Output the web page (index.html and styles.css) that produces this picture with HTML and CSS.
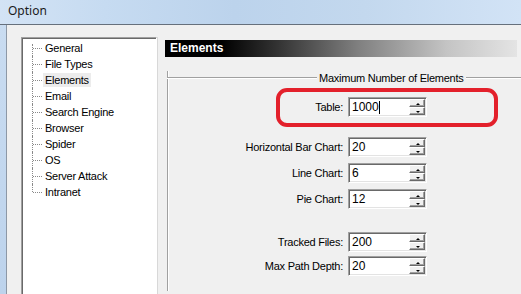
FILE: index.html
```html
<!DOCTYPE html>
<html>
<head>
<meta charset="utf-8">
<title>Option</title>
<link rel="stylesheet" href="styles.css">
</head>
<body>
<div class="titlebar"><span class="title">Option</span></div>
<div class="main">
  <div class="frame"></div>
  <div class="content">
    <div class="tree">
      <ul class="tree-list">
        <li><span class="item">General</span></li>
        <li><span class="item">File Types</span></li>
        <li><span class="item selected">Elements</span></li>
        <li><span class="item">Email</span></li>
        <li><span class="item">Search Engine</span></li>
        <li><span class="item">Browser</span></li>
        <li><span class="item">Spider</span></li>
        <li><span class="item">OS</span></li>
        <li><span class="item">Server Attack</span></li>
        <li class="last"><span class="item">Intranet</span></li>
      </ul>
    </div>
    <div class="panel">
      <div class="header">Elements</div>
      <div class="group">
        <div class="legend"><span class="line left"></span><span class="legend-text">Maximum Number of Elements</span><span class="line right"></span></div>
        <div class="rows first">
          <label class="lbl">Table:</label>
          <div class="spin"><span class="val">1000<span class="caret"></span></span><span class="btns"><span class="btn up"></span><span class="btn down"></span></span></div>
        </div>
        <div class="rows second">
          <label class="lbl">Horizontal Bar Chart:</label>
          <div class="spin"><span class="val">20</span><span class="btns"><span class="btn up"></span><span class="btn down"></span></span></div>
          <label class="lbl">Line Chart:</label>
          <div class="spin"><span class="val">6</span><span class="btns"><span class="btn up"></span><span class="btn down"></span></span></div>
          <label class="lbl">Pie Chart:</label>
          <div class="spin"><span class="val">12</span><span class="btns"><span class="btn up"></span><span class="btn down"></span></span></div>
        </div>
        <div class="rows third">
          <label class="lbl">Tracked Files:</label>
          <div class="spin"><span class="val">200</span><span class="btns"><span class="btn up"></span><span class="btn down"></span></span></div>
          <label class="lbl">Max Path Depth:</label>
          <div class="spin"><span class="val">20</span><span class="btns"><span class="btn up"></span><span class="btn down"></span></span></div>
        </div>
      </div>
    </div>
  </div>
</div>
<div class="annot"></div>
</body>
</html>
```
FILE: styles.css
```css
html, body {
  margin: 0;
  padding: 0;
}
body {
  width: 521px;
  height: 294px;
  overflow: hidden;
  position: relative;
  background: #f0f0f0;
  font-family: "Liberation Sans", Arial, sans-serif;
  font-size: 11px;
  letter-spacing: -0.25px;
  color: #000;
}
.titlebar {
  height: 25px;
  box-sizing: border-box;
  border-bottom: 1px solid #66707c;
  background: linear-gradient(90deg, #d3e3f5 0%, #c6dbf1 20%, #bcd3ec 45%, #c3d8ee 70%, #d2e3f6 100%);
  display: flex;
  align-items: center;
  padding-left: 8px;
}
.title {
  font-family: "Noto Sans", "Open Sans", sans-serif;
  font-size: 12px;
  letter-spacing: 0;
  color: #1a1a1a;
  margin-top: -3px;
}
.main {
  display: flex;
  height: 269px;
  overflow: hidden;
}
.frame {
  width: 6px;
  flex: none;
  background: linear-gradient(180deg, #c9dcf1, #bdd3ec);
  border-right: 1px solid #8d98a6;
}
.content {
  flex: 1;
  display: flex;
  padding: 12px 0 0 14px;
  min-width: 0;
  overflow: hidden;
}
.tree {
  width: 136px;
  flex: none;
  box-sizing: border-box;
  background: #fff;
  border-top: 1px solid #a0a0a0;
  border-left: 1px solid #a0a0a0;
  border-right: 1px solid #fff;
  box-shadow: inset 1px 1px 0 #696969, 1px 0 0 #d8d8d8;
  height: 257px;
}
.tree-list {
  list-style: none;
  margin: 0;
  padding: 2px 0 0 0;
  position: relative;
}
.tree-list li {
  height: 16px;
  display: flex;
  align-items: center;
  padding-left: 21px;
  position: relative;
}
.tree-list li::before {
  content: "";
  position: absolute;
  left: 10px;
  top: 0;
  bottom: 0;
  border-left: 1px dotted #8a8a8a;
}
.tree-list li.last::before {
  bottom: 8px;
}
.tree-list li::after {
  content: "";
  position: absolute;
  left: 11px;
  width: 9px;
  top: 8px;
  border-top: 1px dotted #8a8a8a;
}
.tree-list li:first-child::before {
  top: 4px;
}
.item {
  padding: 1px 2px;
  line-height: 12px;
}
.item.selected {
  background: #ececec;
}
.panel {
  margin-left: 8px;
  padding-top: 3px;
  flex: none;
  width: 380px;
}
.header {
  width: 352px;
  height: 17px;
  box-sizing: border-box;
  padding-left: 5px;
  background: linear-gradient(90deg, #000 0%, #000 16%, #333 32%, #808080 55%, #c4c4c4 80%, #e4e4e4 100%);
  color: #fff;
  font-weight: bold;
  font-size: 12px;
  letter-spacing: 0;
  line-height: 17px;
}
.group {
  margin: 14px 0 0 2px;
  border-left: 1px solid #a0a0a0;
  box-shadow: inset 1px 0 0 #fff;
  height: 220px;
}
.legend {
  display: flex;
  align-items: center;
  height: 13px;
  margin-left: -1px;
}
.line {
  height: 0;
  border-top: 1px solid #a0a0a0;
  border-bottom: 1px solid #fff;
}
.line.left {
  width: 150px;
  flex: none;
}
.line.right {
  flex: 1;
}
.legend-text {
  padding: 0 2px;
  white-space: nowrap;
}
.rows {
  display: grid;
  grid-template-columns: 175px 79px;
  column-gap: 5px;
  align-items: center;
}
.rows.first {
  margin-top: 13px;
}
.rows.second {
  margin-top: 20px;
  row-gap: 6px;
}
.rows.third {
  margin-top: 23px;
  row-gap: 4px;
}
.lbl {
  text-align: right;
  white-space: nowrap;
}
.spin {
  height: 20px;
  box-sizing: border-box;
  display: flex;
  background: #fff;
  border-top: 1px solid #a0a0a0;
  border-left: 1px solid #a0a0a0;
  border-right: 1px solid #fff;
  border-bottom: 1px solid #fff;
  box-shadow: inset 1px 1px 0 #696969, inset -1px -1px 0 #e3e3e3;
}
.val {
  flex: 1;
  padding: 2px 0 0 3px;
  font-size: 12px;
  letter-spacing: 0;
  line-height: 14px;
  display: flex;
  align-items: flex-start;
}
.caret {
  display: inline-block;
  width: 1px;
  height: 13px;
  background: #000;
  margin-top: 1px;
}
.btns {
  width: 17px;
  display: flex;
  flex-direction: column;
  padding: 1px 1px 1px 0;
  box-sizing: border-box;
}
.btn {
  flex: 1;
  background: #f0f0f0;
  border-top: 1px solid #fff;
  border-left: 1px solid #fff;
  border-right: 1px solid #696969;
  border-bottom: 1px solid #696969;
  box-shadow: inset -1px -1px 0 #a0a0a0;
  position: relative;
}
.btn::after {
  content: "";
  position: absolute;
  left: 6px;
  top: 3px;
  width: 0;
  height: 0;
  border-left: 2px solid transparent;
  border-right: 2px solid transparent;
}
.btn.up::after {
  border-bottom: 2px solid #000;
}
.btn.down::after {
  border-top: 2px solid #000;
}
.annot {
  position: absolute;
  left: 276px;
  top: 88px;
  width: 222px;
  height: 39px;
  box-sizing: border-box;
  border: 4px solid #e3202b;
  border-radius: 11px;
}
```
